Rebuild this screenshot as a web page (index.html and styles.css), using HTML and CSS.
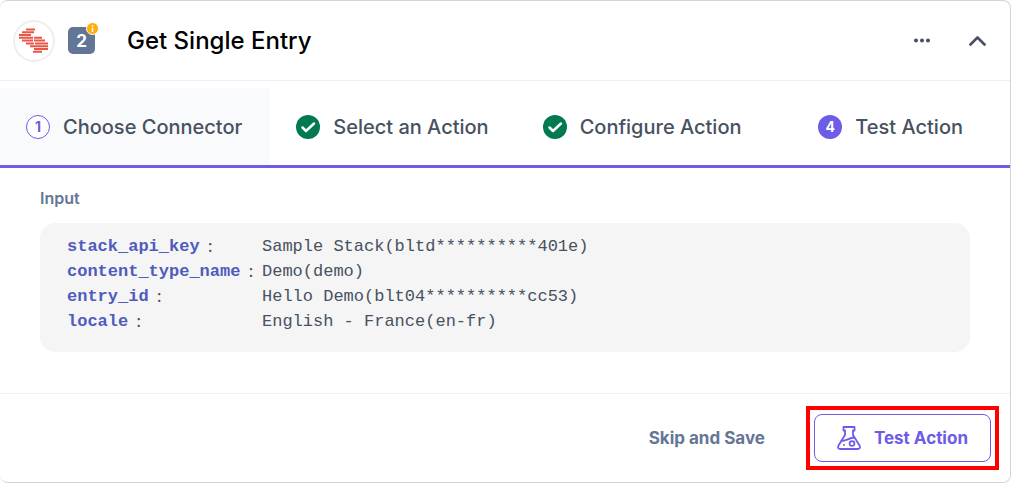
FILE: index.html
```html
<!DOCTYPE html>
<html lang="en">
<head>
<meta charset="utf-8">
<title>Get Single Entry</title>
<link rel="stylesheet" href="styles.css">
</head>
<body>
<main class="card">
  <header class="header">
    <span class="logo">
      <svg width="42" height="42" viewBox="0 0 42 42" aria-hidden="true">
        <circle cx="21" cy="21" r="20" fill="#fff" stroke="#eee" stroke-width="2"/>
        <path stroke="#e95547" stroke-width="2" d="M13 9.500h9M9 12.200h12M6 15h12M6 17.800h14M21 17.800h8M9 20.600h11M21 20.600h11M13 23.400h8M22 23.400h13M17 26.200h18M21 29h14M20 31.800h9"/>
      </svg>
    </span>
    <span class="badge">2
      <svg class="info" width="13" height="13" viewBox="0 0 13 13" aria-hidden="true">
        <circle cx="6.500" cy="6.500" r="6" fill="#ffae0a" stroke="#fff"/>
        <path stroke="#fff" stroke-width="1.500" d="M6.500 3v1.500M6.500 5.500v4.500"/>
      </svg>
    </span>
    <h1 class="title">Get Single Entry</h1>
    <button class="icon-button" type="button" aria-label="More options">
      <svg width="18" height="18" viewBox="0 0 18 18" fill="#475161"><circle cx="3" cy="8.500" r="2"/><circle cx="9" cy="8.500" r="2"/><circle cx="15" cy="8.500" r="2"/></svg>
    </button>
    <button class="icon-button" type="button" aria-label="Collapse">
      <svg width="18" height="18" viewBox="0 0 18 18" fill="none" stroke="#475161" stroke-width="2.700" stroke-linecap="round" stroke-linejoin="round"><path d="M2.500 12.500L9.500 5.500l7 7"/></svg>
    </button>
  </header>
  <nav class="steps">
    <a class="step step-first" href="#connector"><span class="mark mark-outline">1</span>Choose Connector</a>
    <a class="step" href="#select">
      <svg width="24" height="24" viewBox="0 0 24 24" aria-hidden="true"><circle cx="12" cy="12" r="12" fill="#027a50"/><path d="M6.500 12.500l3.500 3.500 8-7.500" fill="none" stroke="#fff" stroke-width="2.500" stroke-linecap="round" stroke-linejoin="round"/></svg>Select an Action</a>
    <a class="step" href="#configure">
      <svg width="24" height="24" viewBox="0 0 24 24" aria-hidden="true"><circle cx="12" cy="12" r="12" fill="#027a50"/><path d="M6.500 12.500l3.500 3.500 8-7.500" fill="none" stroke="#fff" stroke-width="2.500" stroke-linecap="round" stroke-linejoin="round"/></svg>Configure Action</a>
    <a class="step step-last" href="#test"><span class="mark">4</span>Test Action</a>
  </nav>
  <section class="content">
    <h2 class="label">Input</h2>
    <dl class="values">
      <dt><b>stack_api_key</b>:</dt><dd>Sample Stack(bltd**********401e)</dd>
      <dt><b>content_type_name</b>:</dt><dd>Demo(demo)</dd>
      <dt><b>entry_id</b>:</dt><dd>Hello Demo(blt04**********cc53)</dd>
      <dt><b>locale</b>:</dt><dd>English - France(en-fr)</dd>
    </dl>
  </section>
  <footer class="footer">
    <button class="skip" type="button">Skip and Save</button>
    <div class="highlight">
      <button class="test" type="button">
        <svg width="24" height="26" viewBox="0 0 24 26" fill="none" stroke="#6c5ce7" stroke-width="1.800" stroke-linecap="round" stroke-linejoin="round" aria-hidden="true"><path d="M6.500 2h11v3.500h-1.500v4.500l6.500 10.500q1.500 3.500-2 3.500h-17q-3.500 0-2-3.500l6.500-10.500v-4.500h-1.500zM4 16c5 0 8-3 13.500-3.500"/><circle cx="15" cy="18.500" r="2.400"/><path d="M7 20h.1"/></svg>Test Action</button>
    </div>
  </footer>
</main>
</body>
</html>
```
FILE: styles.css
```css
* { box-sizing: border-box; }
body { margin: 0; background: #fff; color: #475161; font-family: Inter, sans-serif; }
button { padding: 0; border: 0; background: none; font: inherit; cursor: pointer; }
.card { display: flex; flex-direction: column; min-height: 100vh; border: 1px solid #d4d4d4; border-left: 0; border-radius: 8px; overflow: hidden; }
.header { display: flex; align-items: center; height: 80px; padding: 0 24px 0 13px; border-bottom: 1px solid #edf1f7; }
.logo { display: flex; }
.badge { position: relative; display: grid; place-items: center; width: 27px; height: 27px; margin-left: 13px; border-radius: 5px; background: #647696; color: #fff; font-size: 17px; font-weight: 700; }
.info { position: absolute; top: -5px; right: -4px; }
.title { flex: 1; margin: 0 0 0 32px; color: #000; font-size: 24px; font-weight: 500; line-height: 32px; }
.icon-button { display: flex; margin-left: 37px; }
.steps { display: flex; margin-top: 7px; border-bottom: 3px solid #6c5ce7; }
.step { display: flex; align-items: center; gap: 13px; height: 77px; padding: 0 28px 0 26px; color: #475161; font-size: 20px; font-weight: 500; text-decoration: none; }
.step-first { background: #f9fafc; }
.step-last { margin-left: auto; padding-right: 47px; }
.mark { display: grid; place-items: center; width: 24px; height: 24px; border-radius: 50%; background: #6c5ce7; color: #fff; font-size: 14px; font-weight: 700; }
.mark-outline { border: 1px solid #6c5ce7; background: #fff; color: #6c5ce7; }
.content { flex: 1; padding: 20px 40px; }
.label { margin: 0; color: #647696; font-size: 16px; font-weight: 600; line-height: 20px; }
.values { display: grid; grid-template-columns: 195px 1fr; margin: 15px 0 0; padding: 11px 27px 18px; border-radius: 15px; background: #f5f5f5; font-family: "Liberation Mono", monospace; font-size: 17px; line-height: 25px; }
.values dt { display: flex; gap: 8px; font-family: Inter, sans-serif; }
.values b { color: #4f5bbd; font-family: "Liberation Mono", monospace; }
.values dd { margin: 0; }
.footer { display: flex; align-items: center; justify-content: flex-end; gap: 41px; height: 89px; padding: 0 11px; border-top: 1px solid #edf1f7; }
.skip { color: #647696; font-size: 17px; font-weight: 700; }
.highlight { padding: 4px; border: 4px solid #f00; }
.test { display: flex; align-items: center; gap: 13px; height: 48px; padding: 0 22px; border: 1px solid #6c5ce7; border-radius: 8px; color: #6c5ce7; font-size: 17px; font-weight: 700; }
.test svg { flex: none; }
```
